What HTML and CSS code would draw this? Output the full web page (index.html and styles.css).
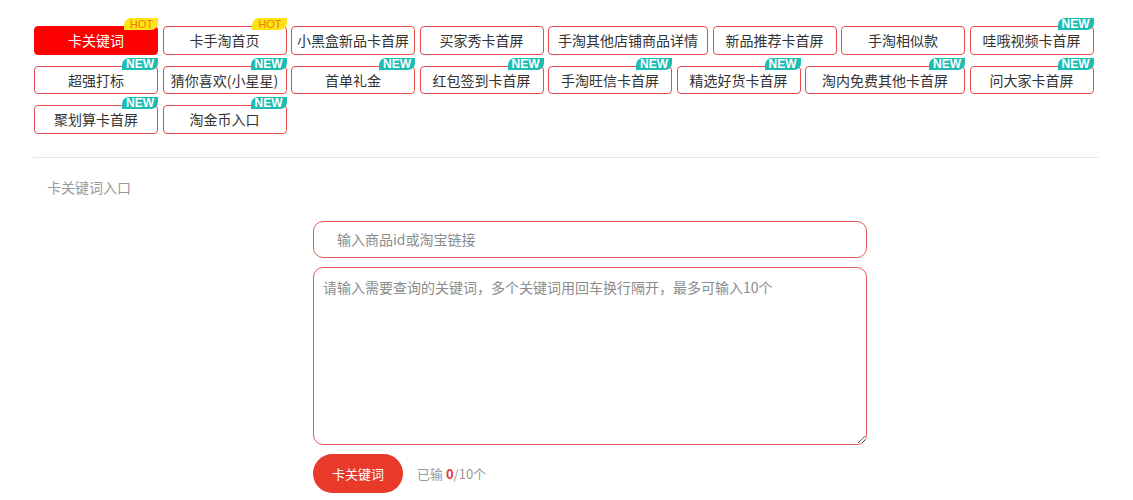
FILE: index.html
```html
<!DOCTYPE html>
<html lang="zh-CN">
<head>
<meta charset="utf-8">
<title>卡关键词入口</title>
<link rel="stylesheet" href="styles.css">
</head>
<body>
<div class="page">
  <div class="tabs">
    <div class="tab active">卡关键词<span class="badge hot">HOT</span></div>
    <div class="tab">卡手淘首页<span class="badge hot">HOT</span></div>
    <div class="tab">小黑盒新品卡首屏</div>
    <div class="tab">买家秀卡首屏</div>
    <div class="tab wide">手淘其他店铺商品详情</div>
    <div class="tab">新品推荐卡首屏</div>
    <div class="tab">手淘相似款</div>
    <div class="tab">哇哦视频卡首屏<span class="badge new">NEW</span></div>
    <div class="tab">超强打标<span class="badge new">NEW</span></div>
    <div class="tab">猜你喜欢(小星星)<span class="badge new">NEW</span></div>
    <div class="tab">首单礼金<span class="badge new">NEW</span></div>
    <div class="tab">红包签到卡首屏<span class="badge new">NEW</span></div>
    <div class="tab">手淘旺信卡首屏<span class="badge new">NEW</span></div>
    <div class="tab">精选好货卡首屏<span class="badge new">NEW</span></div>
    <div class="tab wide">淘内免费其他卡首屏<span class="badge new">NEW</span></div>
    <div class="tab">问大家卡首屏<span class="badge new">NEW</span></div>
    <div class="tab">聚划算卡首屏<span class="badge new">NEW</span></div>
    <div class="tab">淘金币入口<span class="badge new">NEW</span></div>
  </div>
  <div class="divider"></div>
  <div class="section-title">卡关键词入口</div>
  <div class="form">
    <input class="field" type="text" placeholder="输入商品id或淘宝链接">
    <textarea class="area" placeholder="请输入需要查询的关键词，多个关键词用回车换行隔开，最多可输入10个"></textarea>
    <div class="actions">
      <button class="submit" type="button">卡关键词</button>
      <span class="counter">已输 <b class="num">0</b>/10个</span>
    </div>
  </div>
</div>
</body>
</html>
```
FILE: styles.css
```css
* { box-sizing: border-box; }
body {
  margin: 0;
  background: #fff;
  font-family: "Noto Sans CJK SC", "Liberation Sans", sans-serif;
  color: #333;
}
.page {
  padding: 26px 35px 0 33px;
}
.tabs {
  display: flex;
  flex-wrap: wrap;
  gap: 11px 4.5px;
  padding-left: 1px;
}
.tab {
  position: relative;
  width: 124px;
  height: 28.5px;
  border: 1px solid #e64b4b;
  border-radius: 4px;
  display: flex;
  align-items: center;
  justify-content: center;
  font-size: 14px;
  line-height: 18px;
  color: #333;
  white-space: nowrap;
}
.tab.wide { width: 160px; }
.tab.active {
  background: #ff0000;
  border-color: #ff0000;
  color: #fff;
}
.badge {
  position: absolute;
  top: -9px;
  right: -1px;
  height: 12px;
  padding: 0 4px;
  font-family: "Liberation Sans", sans-serif;
  font-size: 11px;
  line-height: 12px;
  border-radius: 7px 0 7px 0;
}
.badge.hot {
  background: #ffe31a;
  color: #f07d00;
  padding: 0 5px 0 6px;
}
.badge.new {
  background: #1dbcb2;
  color: #fff;
  font-weight: bold;
  font-size: 12px;
}
.divider {
  margin-top: 23px;
  border-top: 1px solid #e6e6e6;
}
.section-title {
  margin-top: 20px;
  padding-left: 14px;
  font-size: 14px;
  line-height: 18px;
  color: #999;
}
.form {
  margin-left: 280px;
  width: 554px;
  padding-top: 25px;
  display: flex;
  flex-direction: column;
}
.field {
  display: block;
  width: 554px;
  height: 37px;
  border: 1px solid #e65a55;
  border-radius: 10px;
  padding: 0 0 0 23px;
  font-family: inherit;
  font-size: 14px;
  color: #333;
  outline: none;
}
.area {
  display: block;
  margin-top: 9px;
  width: 554px;
  height: 178px;
  border: 1px solid #e65a55;
  border-radius: 10px;
  padding: 10px 9px;
  font-family: inherit;
  font-size: 14px;
  line-height: 18px;
  color: #333;
  outline: none;
}
.field::placeholder, .area::placeholder { color: #8c8c8c; }
.actions {
  margin-top: 9px;
  display: flex;
  align-items: center;
}
.submit {
  width: 90px;
  height: 39px;
  border: 0;
  border-radius: 20px;
  background: #e8392b;
  color: #fff;
  font-family: inherit;
  font-size: 13px;
}
.counter {
  margin-left: 14px;
  font-size: 13px;
  color: #999;
}
.counter .num {
  color: #e4393c;
  font-weight: bold;
}
```
